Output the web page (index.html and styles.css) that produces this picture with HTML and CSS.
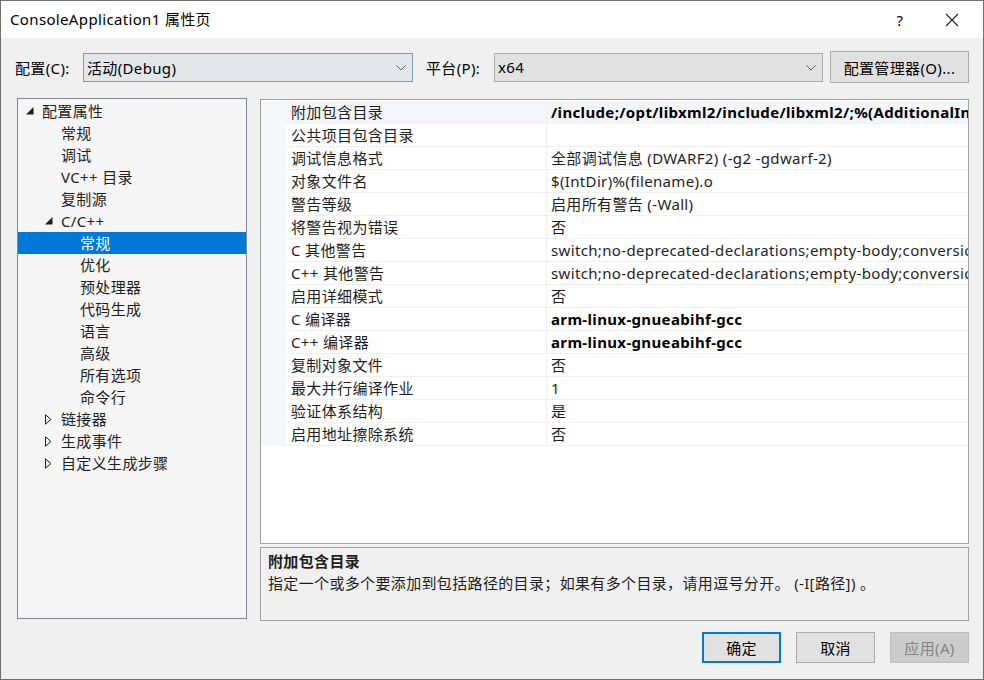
FILE: index.html
```html
<!DOCTYPE html>
<html>
<head>
<meta charset="utf-8">
<link rel="stylesheet" href="styles.css">
</head>
<body>
<div class="window">
  <div class="titlebar">
    <div class="title">ConsoleApplication1 属性页</div>
    <div class="tb-btn help">?</div>
    <div class="tb-btn close">
      <svg width="14" height="14" viewBox="0 0 14 14"><path d="M1 1L13 13M13 1L1 13" stroke="#222" stroke-width="1.1" fill="none"/></svg>
    </div>
  </div>
  <div class="content">
    <div class="toolbar">
      <span class="lbl lbl-config">配置(C):</span>
      <div class="combo combo-active">
        <span>活动(Debug)</span>
        <svg class="chev" width="10" height="6" viewBox="0 0 10 6"><path d="M0.5 0.5L5 5L9.5 0.5" stroke="#606060" stroke-width="1" fill="none"/></svg>
      </div>
      <span class="lbl lbl-platform">平台(P):</span>
      <div class="combo combo-platform">
        <span>x64</span>
        <svg class="chev" width="10" height="6" viewBox="0 0 10 6"><path d="M0.5 0.5L5 5L9.5 0.5" stroke="#606060" stroke-width="1" fill="none"/></svg>
      </div>
      <div class="btn btn-mgr">配置管理器(O)...</div>
    </div>
    <div class="main">
      <div class="tree">
        <div class="node l0"><span class="tw"><svg width="8" height="8" viewBox="0 0 8 8"><path d="M0 7.5H7.5V0Z" fill="#1e1e1e"/></svg></span>配置属性</div>
        <div class="node l1"><span class="tw"></span>常规</div>
        <div class="node l1"><span class="tw"></span>调试</div>
        <div class="node l1"><span class="tw"></span>VC++ 目录</div>
        <div class="node l1"><span class="tw"></span>复制源</div>
        <div class="node l1"><span class="tw"><svg width="8" height="8" viewBox="0 0 8 8"><path d="M0 7.5H7.5V0Z" fill="#1e1e1e"/></svg></span>C/C++</div>
        <div class="node l2 sel"><span class="tw"></span>常规</div>
        <div class="node l2"><span class="tw"></span>优化</div>
        <div class="node l2"><span class="tw"></span>预处理器</div>
        <div class="node l2"><span class="tw"></span>代码生成</div>
        <div class="node l2"><span class="tw"></span>语言</div>
        <div class="node l2"><span class="tw"></span>高级</div>
        <div class="node l2"><span class="tw"></span>所有选项</div>
        <div class="node l2"><span class="tw"></span>命令行</div>
        <div class="node l1"><span class="tw"><svg width="7" height="11" viewBox="0 0 7 11"><path d="M0.5 0.8V10.2L6 5.5Z" stroke="#1e1e1e" stroke-width="1" fill="none"/></svg></span>链接器</div>
        <div class="node l1"><span class="tw"><svg width="7" height="11" viewBox="0 0 7 11"><path d="M0.5 0.8V10.2L6 5.5Z" stroke="#1e1e1e" stroke-width="1" fill="none"/></svg></span>生成事件</div>
        <div class="node l1"><span class="tw"><svg width="7" height="11" viewBox="0 0 7 11"><path d="M0.5 0.8V10.2L6 5.5Z" stroke="#1e1e1e" stroke-width="1" fill="none"/></svg></span>自定义生成步骤</div>
      </div>
      <div class="right">
        <div class="grid">
          <div class="row first"><div class="gut"></div><div class="name">附加包含目录</div><div class="val b">/include;/opt/libxml2/include/libxml2/;%(AdditionalIncludeDirectories)</div></div>
          <div class="row"><div class="gut"></div><div class="name">公共项目包含目录</div><div class="val"></div></div>
          <div class="row"><div class="gut"></div><div class="name">调试信息格式</div><div class="val">全部调试信息 (DWARF2) (-g2 -gdwarf-2)</div></div>
          <div class="row"><div class="gut"></div><div class="name">对象文件名</div><div class="val">$(IntDir)%(filename).o</div></div>
          <div class="row"><div class="gut"></div><div class="name">警告等级</div><div class="val">启用所有警告 (-Wall)</div></div>
          <div class="row"><div class="gut"></div><div class="name">将警告视为错误</div><div class="val">否</div></div>
          <div class="row"><div class="gut"></div><div class="name">C 其他警告</div><div class="val">switch;no-deprecated-declarations;empty-body;conversion;return-type</div></div>
          <div class="row"><div class="gut"></div><div class="name">C++ 其他警告</div><div class="val">switch;no-deprecated-declarations;empty-body;conversion;return-type</div></div>
          <div class="row"><div class="gut"></div><div class="name">启用详细模式</div><div class="val">否</div></div>
          <div class="row"><div class="gut"></div><div class="name">C 编译器</div><div class="val b">arm-linux-gnueabihf-gcc</div></div>
          <div class="row"><div class="gut"></div><div class="name">C++ 编译器</div><div class="val b">arm-linux-gnueabihf-gcc</div></div>
          <div class="row"><div class="gut"></div><div class="name">复制对象文件</div><div class="val">否</div></div>
          <div class="row"><div class="gut"></div><div class="name">最大并行编译作业</div><div class="val">1</div></div>
          <div class="row"><div class="gut"></div><div class="name">验证体系结构</div><div class="val">是</div></div>
          <div class="row"><div class="gut"></div><div class="name">启用地址擦除系统</div><div class="val">否</div></div>
        </div>
        <div class="desc">
          <div class="desc-title">附加包含目录</div>
          <div class="desc-text">指定一个或多个要添加到包括路径的目录；如果有多个目录，请用逗号分开。 (-I[路径]) 。</div>
        </div>
      </div>
    </div>
    <div class="footer">
      <div class="btn fbtn primary">确定</div>
      <div class="btn fbtn">取消</div>
      <div class="btn fbtn disabled">应用(A)</div>
    </div>
  </div>
</div>
</body>
</html>
```
FILE: styles.css
```css
* { box-sizing: border-box; }
html, body { margin: 0; padding: 0; }
body {
  font-family: "Noto Sans", "Noto Sans CJK SC", sans-serif;
  font-size: 15px;
  letter-spacing: 0.35px;
  color: #000;
  background: #f0f0f0;
}
.window {
  width: 984px;
  height: 680px;
  border: 1px solid #6f6f6f;
  display: flex;
  flex-direction: column;
  background: #f0f0f0;
  overflow: hidden;
}
.titlebar {
  height: 37px;
  background: #fff;
  display: flex;
  align-items: center;
  flex-shrink: 0;
}
.title {
  padding-left: 9px;
  flex: 1;
  line-height: 20px;
  margin-top: -1px;
}
.tb-btn {
  display: flex;
  align-items: center;
  justify-content: center;
  height: 36px;
}
.help { width: 30px; margin-right: 14px; font-size: 15px; }
.close { width: 46px; margin-right: 8px; }
.content {
  flex: 1;
  display: flex;
  flex-direction: column;
  padding: 0 14px 0 15px;
}
.toolbar {
  display: flex;
  align-items: center;
  height: 32px;
  margin-top: 13px;
}
.lbl { white-space: nowrap; }
.lbl-config { width: 68px; margin-left: -1px; }
.lbl-platform { width: 68px; margin-left: 13px; }
.combo {
  height: 29px;
  display: flex;
  align-items: center;
  justify-content: space-between;
  padding: 0 6px 0 3px;
}
.combo-active { width: 330px; background: #e3e7eb; border: 1px solid #7a9ebe; }
.combo-platform { width: 329px; background: #e1e1e1; border: 1px solid #adadad; }
.chev { margin-top: 1px; }
.btn {
  background: #e1e1e1;
  border: 1px solid #adadad;
  display: flex;
  align-items: center;
  justify-content: center;
  white-space: nowrap;
}
.btn-mgr { width: 139px; height: 32px; margin-left: 7px; }
.main {
  display: flex;
  margin-top: 15px;
  height: 523px;
}
.tree {
  width: 232px;
  height: 521px;
  margin-left: 1px;
  background: #f5f5f5;
  border: 1px solid #828790;
  padding-top: 1px;
}
.node {
  height: 22px;
  line-height: 22px;
  display: flex;
  align-items: center;
  white-space: nowrap;
  color: #1e1e1e;
}
.tw {
  width: 15px;
  height: 22px;
  display: flex;
  align-items: center;
  justify-content: flex-start;
  padding-left: 1px;
  flex-shrink: 0;
}
.l0 { padding-left: 6px; }
.l0 .tw { width: 18px; padding-left: 2px; }
.l1 { padding-left: 25px; }
.l1 .tw { width: 18px; padding-left: 2px; }
.l2 { padding-left: 44px; }
.l2 .tw { width: 18px; }
.sel { background: #0078d7; color: #fff; }
.right {
  margin-left: 13px;
  width: 709px;
  display: flex;
  flex-direction: column;
}
.grid {
  height: 445px;
  margin-top: 1px;
  background: #fff;
  border: 1px solid #a0a0a0;
  padding-top: 1px;
  overflow: hidden;
}
.row {
  display: flex;
  height: 23px;
  border-bottom: 1px solid #f0f0f0;
}
.gut { width: 25px; background: #f5f7fb; flex-shrink: 0; margin-bottom: -1px; }
.name {
  width: 261px;
  flex-shrink: 0;
  padding-left: 5px;
  line-height: 22px;
  border-right: 1px solid #f0f0f0;
  white-space: nowrap;
  color: #1e1e1e;
}
.val {
  flex: 1;
  padding-left: 4px;
  line-height: 22px;
  white-space: nowrap;
  overflow: hidden;
  color: #1e1e1e;
}
.val.b { font-weight: bold; color: #000; }
.row.first .name, .row.first .val { background: #f3f6fb; }
.desc {
  margin-top: 3px;
  height: 74px;
  border: 1px solid #a0a0a0;
  background: #f0f0f0;
  padding: 3px 7px;
}
.desc-title { font-weight: bold; line-height: 20px; color: #1e1e1e; }
.desc-text { line-height: 22px; margin-top: 1px; color: #1e1e1e; }
.footer {
  display: flex;
  justify-content: flex-end;
  margin-top: 11px;
  gap: 15px;
}
.fbtn { width: 79px; height: 31px; }
.fbtn.primary { border: 2px solid #0078d7; }
.fbtn.disabled { background: #cccccc; border-color: #bfbfbf; color: #838383; }
```
